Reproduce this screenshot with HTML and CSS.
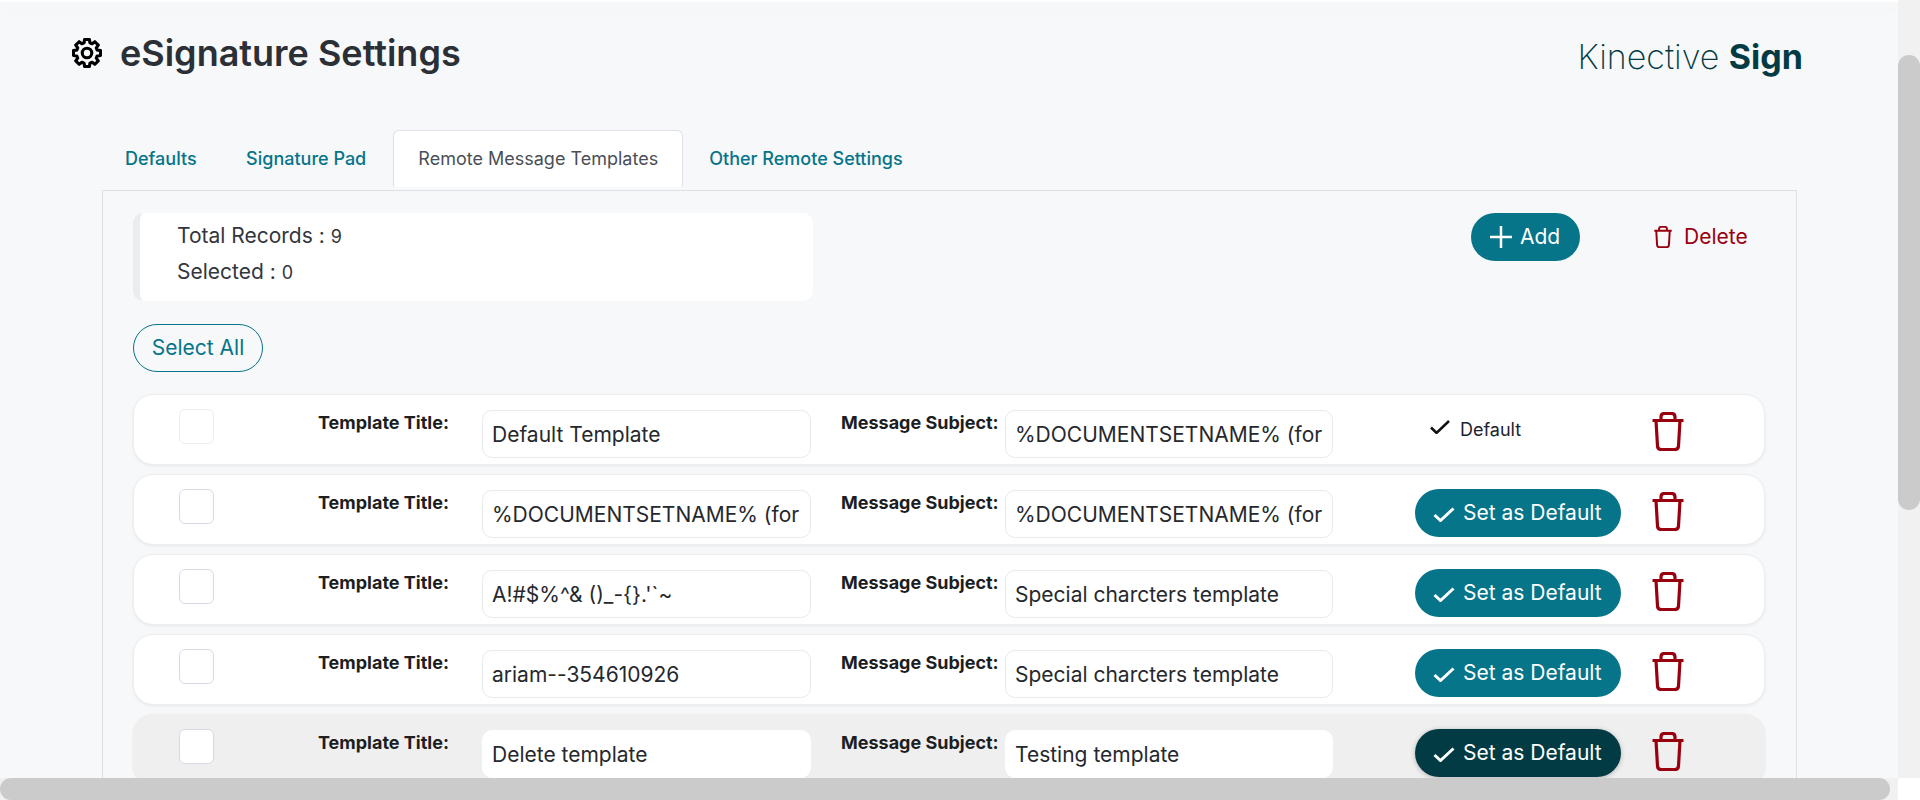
FILE: index.html
```html
<!DOCTYPE html>
<html lang="en">
<head>
<meta charset="utf-8">
<title>eSignature Settings</title>
<link rel="stylesheet" href="styles.css">
</head>
<body>
<div class="shell">
  <main class="content">
    <div class="topbar"></div>
    <header class="page-head">
      <h1 class="title">
        <svg class="gear" viewBox="0 0 24 24"><polygon points="9.66,3.83 10.09,1.17 13.91,1.17 14.34,3.83 16.12,4.57 18.31,2.99 21.01,5.69 19.43,7.88 20.17,9.66 22.83,10.09 22.83,13.91 20.17,14.34 19.43,16.12 21.01,18.31 18.31,21.01 16.12,19.43 14.34,20.17 13.91,22.83 10.09,22.83 9.66,20.17 7.88,19.43 5.69,21.01 2.99,18.31 4.57,16.12 3.83,14.34 1.17,13.91 1.17,10.09 3.83,9.66 4.57,7.88 2.99,5.69 5.69,2.99 7.88,4.57"/><circle cx="12" cy="12" r="3.8"/></svg>
        <span>eSignature Settings</span>
      </h1>
      <div class="brand">Kinective <b>Sign</b></div>
    </header>

    <nav class="tabs">
      <a class="tab">Defaults</a>
      <a class="tab">Signature Pad</a>
      <a class="tab active">Remote Message Templates</a>
      <a class="tab">Other Remote Settings</a>
    </nav>

    <section class="panel">
      <div class="toolbar">
        <div class="stats">
          <div class="stat">Total Records : <small>9</small></div>
          <div class="stat">Selected : <small>0</small></div>
        </div>
        <button class="btn btn-add">
          <svg class="i-plus" viewBox="0 0 22 22"><path d="M11 0V22M0 11H22"/></svg>Add
        </button>
        <button class="btn-del">
          <svg class="trash-sm" viewBox="0 0 32 39"><path d="M.5 8.500H31.500M9 8.500V5Q9 1.500 12.500 1.500H19.500Q23 1.500 23 5V8.500M4 8.500L5.500 34Q5.800 37.500 9 37.500H23Q26.200 37.500 26.500 34L28 8.500"/></svg>Delete
        </button>
      </div>

      <button class="select-all">Select All</button>

      <div class="rows">
        <div class="row">
          <input class="chk" type="checkbox" disabled aria-label="Select">
          <label class="lbl">Template Title:</label>
          <input class="fld" value="Default Template">
          <label class="lbl lbl-subject">Message Subject:</label>
          <input class="fld fld-subject" value="%DOCUMENTSETNAME% (for signature)">
          <div class="is-default">
            <svg class="chk-dark" viewBox="0 0 20 14"><path d="M1 7.500L6.500 13L19 1"/></svg>Default
          </div>
          <svg class="trash" viewBox="0 0 32 39"><path d="M.5 8.500H31.500M9 8.500V5Q9 1.500 12.500 1.500H19.500Q23 1.500 23 5V8.500M4 8.500L5.500 34Q5.800 37.500 9 37.500H23Q26.200 37.500 26.500 34L28 8.500"/></svg>
        </div>

        <div class="row">
          <input class="chk" type="checkbox" aria-label="Select">
          <label class="lbl">Template Title:</label>
          <input class="fld" value="%DOCUMENTSETNAME% (for signature)">
          <label class="lbl lbl-subject">Message Subject:</label>
          <input class="fld fld-subject" value="%DOCUMENTSETNAME% (for signature)">
          <button class="btn btn-default"><svg class="chk-white" viewBox="0 0 22 15"><path d="M1.500 8L7.500 13.500L20.500 1.500"/></svg>Set as Default</button>
          <svg class="trash" viewBox="0 0 32 39"><path d="M.5 8.500H31.500M9 8.500V5Q9 1.500 12.500 1.500H19.500Q23 1.500 23 5V8.500M4 8.500L5.500 34Q5.800 37.500 9 37.500H23Q26.200 37.500 26.500 34L28 8.500"/></svg>
        </div>

        <div class="row">
          <input class="chk" type="checkbox" aria-label="Select">
          <label class="lbl">Template Title:</label>
          <input class="fld" value="A!#$%^&amp; ()_-{}.'`~">
          <label class="lbl lbl-subject">Message Subject:</label>
          <input class="fld fld-subject" value="Special charcters template">
          <button class="btn btn-default"><svg class="chk-white" viewBox="0 0 22 15"><path d="M1.500 8L7.500 13.500L20.500 1.500"/></svg>Set as Default</button>
          <svg class="trash" viewBox="0 0 32 39"><path d="M.5 8.500H31.500M9 8.500V5Q9 1.500 12.500 1.500H19.500Q23 1.500 23 5V8.500M4 8.500L5.500 34Q5.800 37.500 9 37.500H23Q26.200 37.500 26.500 34L28 8.500"/></svg>
        </div>

        <div class="row">
          <input class="chk" type="checkbox" aria-label="Select">
          <label class="lbl">Template Title:</label>
          <input class="fld" value="ariam--354610926">
          <label class="lbl lbl-subject">Message Subject:</label>
          <input class="fld fld-subject" value="Special charcters template">
          <button class="btn btn-default"><svg class="chk-white" viewBox="0 0 22 15"><path d="M1.500 8L7.500 13.500L20.500 1.500"/></svg>Set as Default</button>
          <svg class="trash" viewBox="0 0 32 39"><path d="M.5 8.500H31.500M9 8.500V5Q9 1.500 12.500 1.500H19.500Q23 1.500 23 5V8.500M4 8.500L5.500 34Q5.800 37.500 9 37.500H23Q26.200 37.500 26.500 34L28 8.500"/></svg>
        </div>

        <div class="row row-hover">
          <input class="chk" type="checkbox" aria-label="Select">
          <label class="lbl">Template Title:</label>
          <input class="fld" value="Delete template">
          <label class="lbl lbl-subject">Message Subject:</label>
          <input class="fld fld-subject" value="Testing template">
          <button class="btn btn-default"><svg class="chk-white" viewBox="0 0 22 15"><path d="M1.500 8L7.500 13.500L20.500 1.500"/></svg>Set as Default</button>
          <svg class="trash" viewBox="0 0 32 39"><path d="M.5 8.500H31.500M9 8.500V5Q9 1.500 12.500 1.500H19.500Q23 1.500 23 5V8.500M4 8.500L5.500 34Q5.800 37.500 9 37.500H23Q26.200 37.500 26.500 34L28 8.500"/></svg>
        </div>
      </div>
    </section>
  </main>
  <div class="vtrack"><div class="vthumb"></div></div>
  <div class="htrack"><div class="hthumb"></div></div>
  <div class="corner"></div>
</div>
</body>
</html>
```

FILE: styles.css
```css
* { box-sizing: border-box; }
html, body { margin: 0; height: 100%; overflow: hidden; }
body {
  font-family: Inter, "Noto Sans", sans-serif;
  color: #2b2f36;
  background: #fff;
}
.shell {
  display: grid;
  grid-template-columns: 1898px 22px;
  grid-template-rows: 778px 22px;
  width: 1920px;
  height: 800px;
}
.content {
  background: #f7f8fa;
  overflow: hidden;
}
.topbar {
  height: 2px;
  background: #fff;
  box-shadow: 0 4px 16px rgba(0, 0, 0, .07);
}

.page-head {
  display: flex;
  justify-content: space-between;
  align-items: flex-start;
  padding: 35px 95px 0 72px;
  height: 128px;
}
.title {
  display: flex;
  align-items: center;
  gap: 18px;
  margin: 0;
  font-size: 36px;
  line-height: 32px;
  font-weight: 600;
  color: #2b2f36;
}
.gear { width: 30px; height: 30px; fill: none; stroke: #000; stroke-width: 2.500; stroke-linejoin: round; }
.brand {
  font-size: 34px;
  line-height: 40px;
  font-weight: 200;
  color: #033b44;
}
.brand b { font-weight: 700; }

.tabs {
  display: flex;
  height: 57px;
  margin-left: 102px;
  margin-bottom: 3px;
}
.tab {
  display: flex;
  align-items: center;
  padding: 0 25px;
  font-size: 18px;
  font-weight: 500;
  color: #067489;
  border: 1px solid transparent;
}
.tab:nth-child(1) { padding-left: 22px; padding-right: 22.500px; }
.tab:nth-child(2) { margin-right: 1px; }
.tab.active {
  width: 290px;
  justify-content: center;
  padding: 0;
  background: #fff;
  color: #4a4f57;
  font-weight: 400;
  border-color: #dfe1e6;
  border-bottom-color: transparent;
  border-radius: 6px 6px 0 0;
}

.panel {
  margin-left: 102px;
  width: 1695px;
  padding: 22px 0 0 30px;
  border: 1px solid #dee0e4;
  border-bottom: 0;
}
.toolbar { display: flex; align-items: flex-start; }
.stats {
  width: 680px;
  height: 88px;
  padding: 5px 0 0 37px;
  background: #fff;
  border-left: 7px solid #ebecee;
  border-radius: 10px;
}
.stat { font-size: 21px; line-height: 36px; color: #33363c; }
.stat + .stat { margin-top: -1px; }
.stat small { font-size: 18px; }

.btn {
  display: flex;
  align-items: center;
  border: 0;
  height: 48px;
  border-radius: 24px;
  color: #fff;
  background: #067489;
  font: 400 21px Inter, "Noto Sans", sans-serif;
  padding: 0 0 1px;
}
.btn-add { width: 109px; margin-left: 658px; padding-left: 19px; }
.i-plus { width: 22px; height: 22px; margin-right: 8px; fill: none; stroke: #fff; stroke-width: 2.500; }
.btn-del {
  display: flex;
  align-items: center;
  margin-left: 74px;
  height: 48px;
  padding: 0 0 2px;
  border: 0;
  background: none;
  color: #99000f;
  font: 400 21px Inter, "Noto Sans", sans-serif;
}
.trash-sm { width: 18px; height: 22px; margin: 1px 12px 0 0; fill: none; stroke: #99000f; stroke-width: 3.500; stroke-linejoin: round; }

.select-all {
  display: block;
  width: 130px;
  height: 48px;
  margin-top: 23px;
  padding: 0 0 2px;
  background: transparent;
  border: 1px solid #067489;
  border-radius: 24px;
  color: #067489;
  font: 400 21px Inter, "Noto Sans", sans-serif;
}

.rows { margin-top: 22px; display: flex; flex-direction: column; gap: 9px; }
.row {
  display: grid;
  grid-template-columns: 139px 164px 329px 30px 164px 328px 82px 206px 31px 32px;
  align-items: start;
  width: 1632px;
  height: 71px;
  padding: 14px 0 0 45px;
  background: #fff;
  border: 1px solid #eceef1;
  border-radius: 20px;
  box-shadow: 0 1px 3px rgba(0, 0, 0, .07);
}
.row-hover { background: #efefef; border-color: #efefef; }
.chk {
  appearance: none;
  grid-column: 1;
  width: 35px;
  height: 35px;
  margin: 0;
  background: #fff;
  border: 1px solid #d9d9e6;
  border-radius: 6px;
}
.chk:disabled { border-color: #ecedf1; }
.lbl {
  grid-column: 2;
  font-size: 18px;
  line-height: 22px;
  font-weight: 700;
  color: #1c1e22;
  padding-top: 3px;
}
.fld { margin-top: 1px; }
.lbl-subject { grid-column: 5; }
.fld {
  grid-column: 3;
  width: 100%;
  height: 48px;
  padding: 1px 9px 0;
  background: #fff;
  border: 1px solid #e9eaed;
  border-radius: 10px;
  font: 400 21px Inter, "Noto Sans", sans-serif;
  color: #25282d;
  outline: 0;
}
.fld-subject { grid-column: 6; }
.row-hover .fld { border-color: #fff; }
.is-default {
  grid-column: 8;
  display: flex;
  align-items: center;
  height: 40px;
  margin-left: 15px;
  font-size: 18px;
  color: #1c2230;
}
.chk-dark { width: 20px; height: 14px; margin: -5px 10px 0 0; fill: none; stroke: #111; stroke-width: 2.500; }
.btn-default { grid-column: 8; width: 206px; padding-left: 18px; }
.chk-white { width: 22px; height: 15px; margin: 3px 8px 0 0; fill: none; stroke: #fff; stroke-width: 3; }
.row-hover .btn-default { background: #033b44; box-shadow: 0 1px 5px rgba(0, 0, 0, .25); }
.trash {
  grid-column: 10;
  width: 32px;
  height: 39px;
  margin-top: 3px;
  fill: none;
  stroke: #99000f;
  stroke-width: 3.200;
  stroke-linejoin: round;
}

.vtrack { background: #f1f1f1; padding-top: 55px; }
.vthumb { height: 455px; background: #cbcbcb; border-radius: 11px; }
.htrack { background: #f1f1f1; padding-right: 8px; }
.hthumb { height: 22px; background: #cbcbcb; border-radius: 11px; }
.corner { background: #fff; }
```
